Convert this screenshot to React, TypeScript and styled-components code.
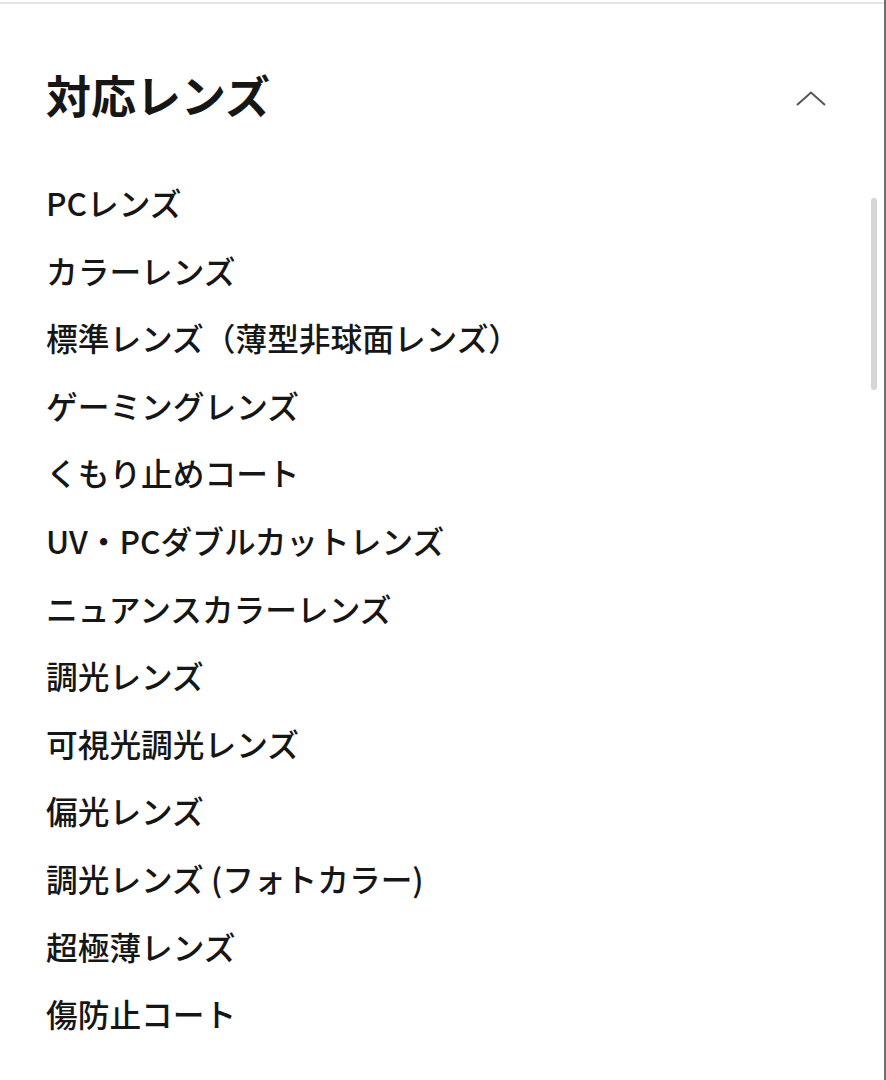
import styled, { createGlobalStyle } from 'styled-components';

const lenses = [
  'PCレンズ',
  'カラーレンズ',
  '標準レンズ（薄型非球面レンズ）',
  'ゲーミングレンズ',
  'くもり止めコート',
  'UV・PCダブルカットレンズ',
  'ニュアンスカラーレンズ',
  '調光レンズ',
  '可視光調光レンズ',
  '偏光レンズ',
  '調光レンズ (フォトカラー)',
  '超極薄レンズ',
  '傷防止コート',
];

const GlobalStyle = createGlobalStyle`
  html, body {
    margin: 0;
    padding: 0;
    background: #fff;
  }

  body {
    font-family: "Noto Sans CJK JP", "Noto Sans", sans-serif;
    color: #161616;
  }
`;

const ChevronUp = () => (
  <svg width="30" height="15" viewBox="0 0 30 15" fill="none">
    <path d="M1 14 L15 1.5 L29 14" stroke="#555" strokeWidth="2" />
  </svg>
);

const LensAccordion = () => (
  <S.Panel>
    <S.Header>
      <S.Title>対応レンズ</S.Title>
      <S.ToggleButton aria-label="閉じる">
        <ChevronUp />
      </S.ToggleButton>
    </S.Header>
    <S.List>
      {lenses.map((name) => (
        <S.Item key={name}>{name}</S.Item>
      ))}
    </S.List>
    <S.ScrollThumb />
  </S.Panel>
);

const App = () => (
  <>
    <GlobalStyle />
    <LensAccordion />
  </>
);

export default App;

const S = {
  Panel: styled.section`
    position: relative;
    box-sizing: border-box;
    height: 1080px;
    overflow: hidden;

    padding: 0 0 0 46px;

    border-right: 2px solid #6f6f6f;
    background: #fff;

    &::before {
      content: '';
      position: absolute;
      top: 2px;
      left: 0;
      right: 0;
      height: 2px;
      background: #e4e4e4;
    }
  `,

  Header: styled.div`
    display: flex;
    align-items: center;
    justify-content: space-between;

    height: 50px;
    margin-top: 70px;
    padding-right: 58px;
  `,

  Title: styled.h2`
    margin: 0;

    font-size: 45px;
    font-weight: 700;
    line-height: 50px;
  `,

  ToggleButton: styled.button`
    display: flex;
    padding: 0;
    margin-top: 6px;

    border: none;
    background: none;
  `,

  List: styled.ul`
    margin: 0;
    padding: 62px 0 0;
    list-style: none;
  `,

  Item: styled.li`
    height: 67.6px;

    font-size: 31.7px;
    font-weight: 500;
    line-height: 40px;
  `,

  ScrollThumb: styled.div`
    position: absolute;
    top: 198px;
    right: 7px;

    width: 6px;
    height: 192px;

    border-radius: 3px;
    background: #d6d6d6;
  `,
};
